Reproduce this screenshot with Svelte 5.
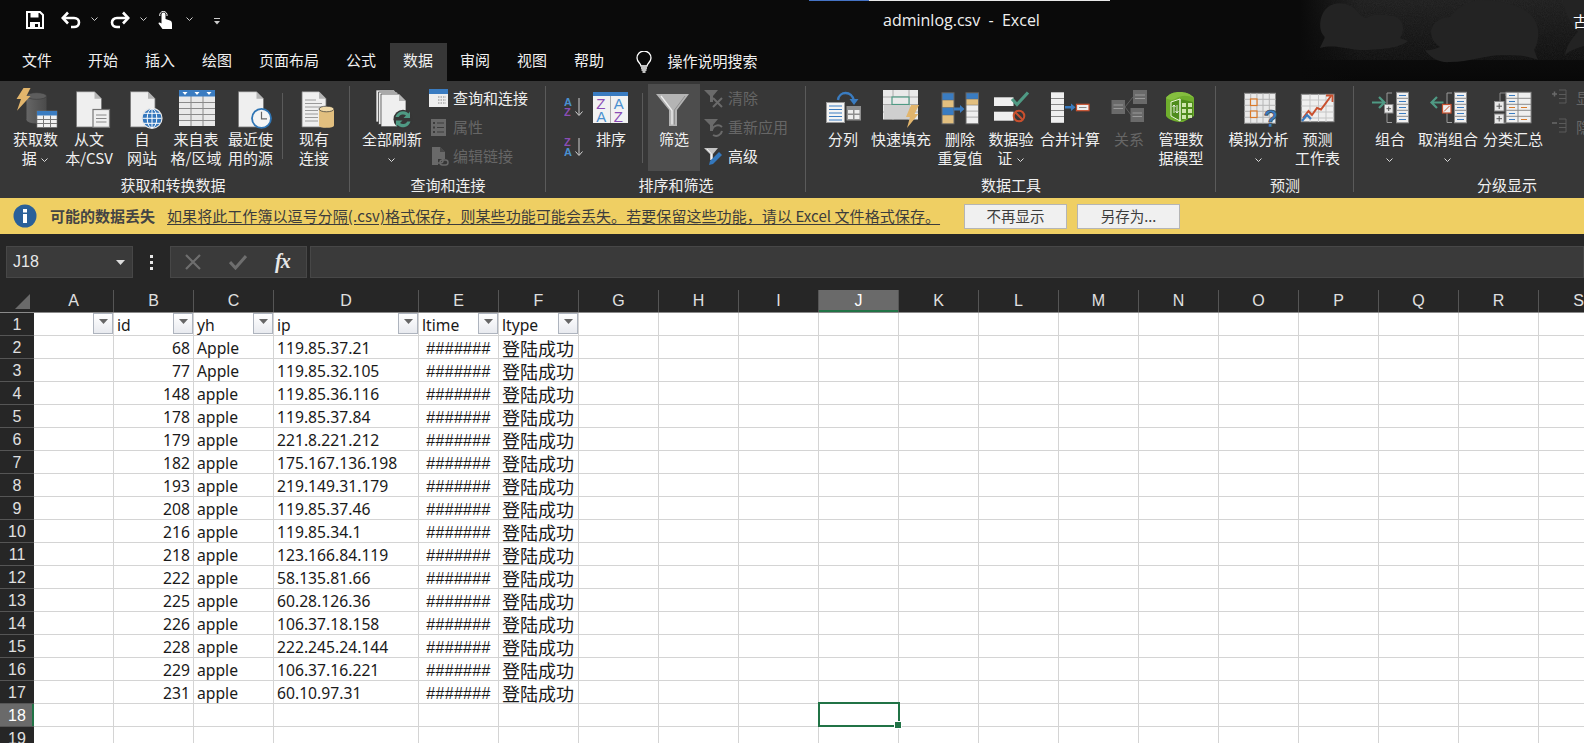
<script>
  const cols = ['A','B','C','D','E','F','G','H','I','J','K','L','M','N','O','P','Q','R','S'];
  const data = [
    [68,'Apple','119.85.37.21'],[77,'Apple','119.85.32.105'],[148,'apple','119.85.36.116'],
    [178,'apple','119.85.37.84'],[179,'apple','221.8.221.212'],[182,'apple','175.167.136.198'],
    [193,'apple','219.149.31.179'],[208,'apple','119.85.37.46'],[216,'apple','119.85.34.1'],
    [218,'apple','123.166.84.119'],[222,'apple','58.135.81.66'],[225,'apple','60.28.126.36'],
    [226,'apple','106.37.18.158'],[228,'apple','222.245.24.144'],[229,'apple','106.37.16.221'],
    [231,'apple','60.10.97.31']
  ];
  const head = ['', 'id', 'yh', 'ip', 'ltime', 'ltype'];
  const tabs = ['开始','插入','绘图','页面布局','公式','数据','审阅','视图','帮助'];
  const blanks = Array.from({ length: 13 });
</script>

<div class="app">
  <div class="top">
    <svg class="clouds" viewBox="0 0 284 81" width="284" height="81" aria-hidden="true">
      <defs>
        <linearGradient id="vg" x1="0" y1="0" x2="0" y2="1"><stop offset="0" stop-color="#1b1b1b"/><stop offset=".75" stop-color="#0b0b0b"/><stop offset="1" stop-color="#080808"/></linearGradient>
        <linearGradient id="hg" x1="0" y1="0" x2="1" y2="0"><stop offset="0" stop-color="#0a0a0a"/><stop offset="1" stop-color="#0a0a0a" stop-opacity="0"/></linearGradient>
        <filter id="nz" x="0" y="0" width="100%" height="100%"><feTurbulence type="fractalNoise" baseFrequency="1.100" numOctaves="1" seed="4"/><feColorMatrix values="0 0 0 0 .2  0 0 0 0 .2  0 0 0 0 .2  0 0 0 .35 0"/></filter>
      </defs>
      <rect width="284" height="81" fill="url(#vg)"/>
      <rect width="284" height="60" filter="url(#nz)" opacity=".5"/>
      <rect width="60" height="81" fill="url(#hg)"/>
      <path d="M20 48C22 42 26 38 24 36C18 30 19 14 28 7C36 1 50 2 58 12C62 18 66 19 70 16C76 14 84 15 94 16C103 19 106 30 100 38L108 41C100 48 80 50 60 50C45 49 35 44 20 48Z" fill="#232323"/>
      <path d="M125 50C130 58 140 63 150 62C170 62 185 55 205 55C222 55 232 57 238 60L234 50C240 40 240 25 232 16C222 5 200 0 180 0C165 2 155 10 150 17C145 17 132 20 131 32C131 40 136 44 140 47C135 49 128 51 125 50Z" fill="#232323"/>
      <path d="M263 0C264 10 268 20 278 32C270 40 266 48 265 55C270 50 278 48 284 46L284 0Z" fill="#232323"/>
    </svg>
    <header class="title">
      <div class="progress"><i></i></div>
      <div class="qat">
        <svg class="q save" viewBox="0 0 18 18" width="18" height="18"><path d="M1 1H14L17 4V17H1Z" fill="none" stroke="#fff" stroke-width="2"/><path d="M4.500 1.500H12.500V6.500H4.500Z" fill="#fff"/><path d="M4 11H14V17H4Z" fill="#fff"/><path d="M9 13H12V16H9Z" fill="#0a0a0a"/></svg>
        <svg class="q undo" viewBox="0 0 20 18" width="20" height="18"><path d="M2 7H13C16.500 7 18 9.500 18 11.500C18 14.500 15.500 16 13 16H10" fill="none" stroke="#fff" stroke-width="2.600"/><path d="M7 1.500L1.800 7L7 12.500" fill="none" stroke="#fff" stroke-width="2.600"/></svg>
        <svg class="q c1" viewBox="0 0 7 4" width="7" height="4"><path d="M.5.5L3.500 3.500L6.500.5" fill="none" stroke="#ccc"/></svg>
        <svg class="q redo" viewBox="0 0 20 18" width="20" height="18"><path d="M18 7H7C3.500 7 2 9.500 2 11.500C2 14.500 4.500 16 7 16H10" fill="none" stroke="#fff" stroke-width="2.600"/><path d="M13 1.500L18.200 7L13 12.500" fill="none" stroke="#fff" stroke-width="2.600"/></svg>
        <svg class="q c2" viewBox="0 0 7 4" width="7" height="4"><path d="M.5.5L3.500 3.500L6.500.5" fill="none" stroke="#ccc"/></svg>
        <svg class="q touch" viewBox="0 0 14 18" width="14" height="18"><path d="M3.500 10V3.500A2 2 0 0 1 7.500 3.500V8L12 9.500C13.500 10 14 11 14 13V18H4.500L.5 12.500Q.5 10.500 3.500 12.500Z" fill="#fff"/><path d="M1.800 5A3.700 3.700 0 1 1 9 5" fill="none" stroke="#fff"/></svg>
        <svg class="q c3" viewBox="0 0 7 4" width="7" height="4"><path d="M.5.5L3.500 3.500L6.500.5" fill="none" stroke="#ccc"/></svg>
        <svg class="q cust" viewBox="0 0 6 7" width="6" height="7"><path d="M0 .5H6" stroke="#ccc"/><path d="M0 3H6L3 6.500Z" fill="#ccc"/></svg>
      </div>
      <div class="name">adminlog.csv&nbsp;&nbsp;-&nbsp;&nbsp;Excel</div>
      <div class="user">古</div>
    </header>

    <nav class="tabs">
      <span class="tab first">文件</span>
      {#each tabs as t}
        <span class="tab" class:on={t === '数据'}>{t}</span>
      {/each}
      <svg class="bulb" viewBox="0 0 16 22" width="16" height="22"><path d="M5 15C4.500 12 1 11 1 7A7 7 0 0 1 15 7C15 11 11.500 12 11 15Z" fill="none" stroke="#fff" stroke-width="1.300"/><path d="M5 17H11M5.500 19H10.500M6.500 21H9.500" stroke="#fff" stroke-width="1.300"/></svg>
      <span class="search">操作说明搜索</span>
    </nav>
  </div>

  <section class="ribbon">
    <div class="group g1">
      <div class="items">
        <div class="btn" style="width:55px">
          <svg class="ic" viewBox="0 0 44 44"><defs><linearGradient id="cy" x1="0" x2="1" y1="0" y2="0"><stop offset="0" stop-color="#666"/><stop offset="1" stop-color="#4a4a4a"/></linearGradient></defs><rect x="12.500" y="10" width="20" height="24" fill="url(#cy)"/><ellipse cx="22.500" cy="34" rx="10" ry="3.500" fill="url(#cy)"/><ellipse cx="22.500" cy="10" rx="10" ry="3.300" fill="#5d5d5d" stroke="#3a3a3a" stroke-width=".6"/><path d="M9.500 2H16.500L12.500 10H16.500L3 24.700L7 13H2.500Z" fill="#e2b56c"/><rect x="23" y="25" width="20" height="16.300" fill="#f1f1f1" stroke="#777" stroke-width=".6"/><rect x="23" y="25" width="20" height="4.500" fill="#3a7cc1"/><path d="M23 33.500H43M23 37.500H43M29.500 29.500V41.300M36.500 29.500V41.300" stroke="#777"/></svg>
          <span class="lb">获取数<br>据 <svg class="car" viewBox="0 0 7 4"><path d="M.5.5L3.500 3.500L6.500.5" fill="none" stroke="#ddd"/></svg></span>
        </div>
        <div class="btn" style="width:52px">
          <svg class="ic" viewBox="0 0 44 44"><path d="M9.500 5.700H27.500L34.500 12.700V41H9.500Z" fill="#efefef" stroke="#777" stroke-width=".8"/><path d="M27.500 5.700V12.700H34.500Z" fill="#b5b5b5"/><rect x="26" y="23.500" width="16.500" height="17.800" fill="#efefef" stroke="#777" stroke-width="1.200"/><path d="M29 29H39.500M29 32.500H39.500M29 36H39.500" stroke="#888"/></svg>
          <span class="lb">从文<br>本/CSV</span>
        </div>
        <div class="btn" style="width:54px">
          <svg class="ic" viewBox="0 0 44 44"><path d="M10.500 5.700H28L35 12.700V41H10.500Z" fill="#efefef" stroke="#777" stroke-width=".8"/><path d="M28 5.700V12.700H35Z" fill="#b5b5b5"/><circle cx="32" cy="32.300" r="10" fill="#3477bd" stroke="#e8e8e8" stroke-width="1.200"/><path d="M22.500 32.300H41.500M24 27.300H40M24 37.300H40M32 22.800V41.800" stroke="#fff" stroke-width="1"/><ellipse cx="32" cy="32.300" rx="4.800" ry="9.500" fill="none" stroke="#fff"/></svg>
          <span class="lb">自<br>网站</span>
        </div>
        <div class="btn" style="width:54px">
          <svg class="ic" viewBox="0 0 44 44"><rect x="5" y="4" width="36" height="36" fill="#e9e9e9"/><path d="M5 16.500H41M5 22.500H41M5 28.500H41M5 34.500H41M17 10V40M29 10V40" stroke="#8a8a8a"/><rect x="5" y="4" width="36" height="6.500" fill="#3a7cc1"/><path d="M8.500 6H13.500L11 9ZM20.500 6H25.500L23 9ZM32.500 6H37.500L35 9Z" fill="#fff"/></svg>
          <span class="lb">来自表<br>格/区域</span>
        </div>
        <div class="btn" style="width:55px">
          <svg class="ic" viewBox="0 0 44 44"><path d="M9.500 5.700H27.500L34.500 12.700V41H9.500Z" fill="#efefef" stroke="#777" stroke-width=".8"/><path d="M27.500 5.700V12.700H34.500Z" fill="#b5b5b5"/><circle cx="32.500" cy="32.300" r="9.500" fill="#f4f4f4" stroke="#2f75b5" stroke-width="1.800"/><path d="M32.500 25.800V32.800H38" fill="none" stroke="#666" stroke-width="1.200"/></svg>
          <span class="lb">最近使<br>用的源</span>
        </div>
        <i class="vsep a"></i>
        <div class="btn" style="width:46px">
          <svg class="ic" viewBox="0 0 44 44"><path d="M10 5.700H27L34 12.700V41H10Z" fill="#efefef" stroke="#777" stroke-width=".8"/><path d="M27 5.700V12.700H34Z" fill="#b5b5b5"/><path d="M13 14H24M13 17.500H30M13 21H30M13 24.500H26M13 28H26M13 31.500H26M13 35H26" stroke="#9a9a9a"/><rect x="27" y="23" width="15" height="16.500" fill="#e2bf7f"/><ellipse cx="34.500" cy="39.500" rx="7.500" ry="2.300" fill="#e2bf7f"/><ellipse cx="34.500" cy="23" rx="7.500" ry="2.800" fill="#f0d9a8" stroke="#333" stroke-width=".7"/></svg>
          <span class="lb">现有<br>连接</span>
        </div>
      </div>
      <div class="gl" style="padding-right:4px">获取和转换数据</div>
    </div>

    <div class="group g2">
      <div class="items">
        <div class="btn" style="width:68px">
          <svg class="ic" viewBox="0 0 44 44"><path d="M6 4H24L30 10V36H6Z" fill="#e8e8e8" stroke="#333" stroke-width=".7"/><path d="M8.500 6H26.500L32.500 12V38.500H8.500Z" fill="#e8e8e8" stroke="#333" stroke-width=".7"/><path d="M11 8H29L36 15V40.700H11Z" fill="#efefef" stroke="#333" stroke-width=".7"/><path d="M29 8V15H36Z" fill="#b5b5b5"/><circle cx="33" cy="33.300" r="9.500" fill="#363636"/><path d="M25.500 31A7.800 7.800 0 0 1 38.500 27.500L40 25.500V32H33.500L36 29.500A4.800 4.800 0 0 0 28.700 31Z" fill="#4f9a84"/><path d="M40.500 35.500A7.800 7.800 0 0 1 27.500 39L26 41V34.500H32.500L30 37A4.800 4.800 0 0 0 37.300 35.500Z" fill="#4f9a84"/></svg>
          <span class="lb">全部刷新<br><svg class="car" viewBox="0 0 7 4"><path d="M.5.5L3.500 3.500L6.500.5" fill="none" stroke="#ddd"/></svg></span>
        </div>
        <div class="small sm2">
          <div class="row"><svg class="si" viewBox="0 0 20 20"><rect x="0" y="1" width="19" height="18" fill="#eee"/><rect x="0" y="1" width="19" height="5" fill="#3a7cc1"/><path d="M9 9H17M9 12H17M9 15H17" stroke="#888" stroke-dasharray="1.500 1"/></svg><span>查询和连接</span></div>
          <div class="row off"><svg class="si" viewBox="0 0 20 20"><rect x="2" y="2" width="15" height="17" fill="#696969"/><path d="M8 6H15M8 10.500H15M8 15H15" stroke="#3c3c3c"/><rect x="4" y="5" width="2" height="2" fill="#3c3c3c"/><rect x="4" y="9.500" width="2" height="2" fill="#3c3c3c"/><rect x="4" y="14" width="2" height="2" fill="#3c3c3c"/></svg><span>属性</span></div>
          <div class="row off"><svg class="si" viewBox="0 0 20 20"><path d="M3 1H11L16 6V13H9V19H3Z" fill="#696969"/><path d="M11 1V6H16Z" fill="#484848"/><rect x="6" y="12" width="8" height="5" rx="2.500" fill="none" stroke="#696969" stroke-width="1.500"/><rect x="11" y="14" width="8" height="5" rx="2.500" fill="none" stroke="#696969" stroke-width="1.500"/></svg><span>编辑链接</span></div>
        </div>
      </div>
      <div class="gl">查询和连接</div>
    </div>

    <div class="group g3">
      <div class="items">
        <div class="sorts">
          <svg class="sa" viewBox="0 0 20 22" width="20" height="22"><text x="0" y="10" class="ta">A</text><text x="0" y="20" class="tz">Z</text><path d="M15 2V19M11.500 15.500L15 19.500L18.500 15.500" fill="none" stroke="#cfcfcf"/></svg>
          <svg class="sb" viewBox="0 0 20 22" width="20" height="22"><text x="0" y="10" class="tz">Z</text><text x="0" y="20" class="ta">A</text><path d="M15 2V19M11.500 15.500L15 19.500L18.500 15.500" fill="none" stroke="#cfcfcf"/></svg>
        </div>
        <div class="btn" style="width:50px">
          <svg class="ic" viewBox="0 0 44 44"><rect x="4" y="6" width="35" height="31" fill="#f2f2f2"/><rect x="4" y="6" width="35" height="4" fill="#3a7cc1"/><path d="M21.500 10V37" stroke="#aaa"/><text x="7.300" y="23" class="tb tz">Z</text><text x="7.300" y="35.500" class="tb ta">A</text><text x="24.800" y="23" class="tb ta">A</text><text x="24.800" y="35.500" class="tb tz">Z</text></svg>
          <span class="lb">排序</span>
        </div>
        <i class="vsep b"></i>
        <div class="btn filt">
          <svg class="ic" viewBox="0 0 44 44"><path d="M4 8H37L25 24V40H17V24Z" fill="#b4b4b4"/><path d="M9 10L20 24.500V38.500" fill="none" stroke="#eee" stroke-width="1.300"/><path d="M33 10L22.500 24V38.500" fill="none" stroke="#8f8f8f"/></svg>
          <span class="lb">筛选</span>
        </div>
        <div class="small sm3">
          <div class="row off"><svg class="si" viewBox="0 0 20 20"><path d="M0 2H14L9 8V14H6V8Z" fill="#6a6a6a"/><path d="M9 10L18 19M18 10L9 19" stroke="#6a6a6a" stroke-width="2"/></svg><span>清除</span></div>
          <div class="row off"><svg class="si" viewBox="0 0 20 20"><path d="M0 2H14L9 8V14H6V8Z" fill="#6a6a6a"/><path d="M8 13A6 6 0 0 1 18 10M18 14A6 6 0 0 1 9 18" fill="none" stroke="#6a6a6a" stroke-width="2"/></svg><span>重新应用</span></div>
          <div class="row"><svg class="si" viewBox="0 0 20 20"><path d="M0 2H14L9 8V14H6V8Z" fill="#c4c4c4"/><path d="M3 3L7.500 8V13" fill="none" stroke="#fff" stroke-width=".8"/><path d="M5 19L6 15L15 6L18 9L9 18Z" fill="#3478bd"/></svg><span>高级</span></div>
        </div>
      </div>
      <div class="gl" style="padding-right:0">排序和筛选</div>
    </div>

    <div class="group g4">
      <div class="items">
        <div class="btn" style="width:58px">
          <svg class="ic" viewBox="0 0 44 44"><rect x="5.500" y="16.500" width="18" height="20" fill="#f4f4f4" stroke="#9a9a9a"/><path d="M8 20H21M8 23.500H21M8 27H21M8 30.500H21M8 34H21" stroke="#3a7cc1" stroke-width="1.200"/><rect x="25.500" y="20" width="14.500" height="14.500" fill="#8f8f8f"/><rect x="27" y="24" width="5" height="3.500" fill="#eee"/><rect x="33.500" y="24" width="5" height="3.500" fill="#eee"/><rect x="27" y="29" width="5" height="4" fill="#eee"/><rect x="33.500" y="29" width="5" height="4" fill="#eee"/><path d="M17 14C18 5 31 4 33 15" fill="none" stroke="#3a7cc1" stroke-width="2.400"/><path d="M28.500 13H37.500L33 19Z" fill="#3a7cc1"/></svg>
          <span class="lb">分列</span>
        </div>
        <div class="btn" style="width:58px">
          <svg class="ic" viewBox="0 0 44 44"><rect x="4" y="4" width="35" height="29.500" fill="#e9e9e9"/><path d="M4 11H39M4 18.500H39M4 26H39M14 4V34M30 4V34" stroke="#aaa"/><rect x="13" y="11" width="17" height="7.500" fill="#e9e9e9" stroke="#4f9a84" stroke-width="1.200"/><rect x="5" y="19" width="25" height="14" fill="#cfcfcf"/><path d="M32 19H40L35.500 28H39.500L28 42L31 31H27Z" fill="#e2b56c"/></svg>
          <span class="lb">快速填充</span>
        </div>
        <div class="btn" style="width:60px">
          <svg class="ic" viewBox="0 0 44 44"><rect x="3.500" y="6.300" width="13" height="32" fill="#666"/><rect x="4.500" y="7.300" width="11" height="6.500" fill="#3a7cc1"/><rect x="4.500" y="14.300" width="11" height="7" fill="#e2bf7f"/><rect x="4.500" y="21.800" width="11" height="7" fill="#3a7cc1"/><rect x="4.500" y="29.300" width="11" height="8" fill="#e2bf7f"/><rect x="27.500" y="6.300" width="13.500" height="32" fill="#666"/><rect x="28.500" y="7.300" width="11.500" height="5.500" fill="#3a7cc1"/><rect x="28.500" y="13.300" width="11.500" height="5.500" fill="#e2bf7f"/><rect x="28.500" y="19.300" width="11.500" height="5.500" fill="#efefef"/><rect x="28.500" y="25.300" width="11.500" height="5.500" fill="#efefef"/><rect x="28.500" y="31.300" width="11.500" height="6" fill="#efefef"/><path d="M16 21.500H22V19L26.500 23L22 27V24.500H16Z" fill="#3a7cc1"/></svg>
          <span class="lb">删除<br>重复值</span>
        </div>
        <div class="btn" style="width:42px">
          <svg class="ic" viewBox="0 0 44 44"><rect x="5" y="11.300" width="19.500" height="8.700" fill="#efefef"/><rect x="5" y="25.700" width="19.500" height="9" fill="#efefef"/><path d="M23 13L28 18.500L39 6.500" fill="none" stroke="#4f9a84" stroke-width="3.200"/><circle cx="30" cy="30" r="5.300" fill="#363636" stroke="#c9502e" stroke-width="2"/><path d="M26.500 26.500L33.500 33.500" stroke="#c9502e" stroke-width="2"/></svg>
          <span class="lb nw">数据验<br>证 <svg class="car" viewBox="0 0 7 4"><path d="M.5.5L3.500 3.500L6.500.5" fill="none" stroke="#ddd"/></svg></span>
        </div>
        <div class="btn" style="width:76px">
          <svg class="ic" viewBox="0 0 44 44"><rect x="3" y="6.300" width="13" height="30.500" fill="#efefef"/><path d="M3 12.500H16M3 18.500H16M3 24.500H16M3 30.500H16" stroke="#888"/><path d="M17 20H23V17.500L27.500 21.300L23 25V22.500H17Z" fill="#3a7cc1"/><rect x="28.500" y="18.300" width="12.500" height="6.400" fill="#efefef" stroke="#c9502e" stroke-width="1.200"/><path d="M31 21.500H38.500" stroke="#888"/></svg>
          <span class="lb">合并计算</span>
        </div>
        <div class="btn off" style="width:42px">
          <svg class="ic" viewBox="0 0 44 44"><path d="M18 21L26 11M18 21L24 29" stroke="#5e5e5e"/><rect x="4.500" y="14" width="13.500" height="14" fill="#6a6a6a"/><rect x="26" y="4" width="14" height="14" fill="#6a6a6a"/><rect x="23.500" y="22" width="13.500" height="14" fill="#6a6a6a"/><path d="M6.500 19H16M6.500 22.500H16M28 9H38M28 12.500H38M25.500 27H35M25.500 30.500H35" stroke="#9a9a9a"/></svg>
          <span class="lb">关系</span>
        </div>
        <div class="btn" style="width:62px">
          <svg class="ic" viewBox="0 0 44 44"><path d="M7 12C12 4 29 4 35 12V30L24 36C16 36 10 34 7 30Z" fill="#6fae2d"/><path d="M7 12C12 15 14 14 17 12.500C22 9 29 9 35 12C29 4 12 4 7 12Z" fill="#85bf3f"/><path d="M12 16L21 13L34 16V31L21 35L12 30Z" fill="#4f8c1d"/><path d="M21 13V35M12 16L21 13V35L12 30Z" fill="none" stroke="#e8f3d8" stroke-width="1"/><path d="M23 17H27V21H23ZM29 17H33V21H29ZM23 23H27V27H23ZM29 23H33V27H29ZM23 29H27V33H23ZM29 29H33V32H29Z" fill="#cfe6ad"/><path d="M15 27V19M13.500 21L15 19L16.500 21M18 19V27M16.500 25L18 27L19.500 25" stroke="#fff" fill="none" stroke-width=".8"/></svg>
          <span class="lb nw">管理数<br>据模型</span>
        </div>
      </div>
      <div class="gl">数据工具</div>
    </div>

    <div class="group g5">
      <div class="items">
        <div class="btn" style="width:61px">
          <svg class="ic" viewBox="0 0 44 44"><rect x="7.500" y="7.300" width="31" height="30" fill="#e9e9e9" stroke="#8a8a8a"/><path d="M7.500 13.300H38.500M7.500 19.300H38.500M7.500 25.300H38.500M7.500 31.300H38.500M13.700 7.300V37.300M19.900 7.300V37.300M26 7.300V37.300M32.300 7.300V37.300" stroke="#b5b5b5"/><rect x="13.500" y="13" width="6.500" height="6.500" fill="#e9e9e9" stroke="#d97a2a" stroke-width="1.200"/><rect x="13.500" y="25" width="6.500" height="6.500" fill="#e9e9e9" stroke="#d97a2a" stroke-width="1.200"/><text x="26.500" y="41" class="tq">?</text></svg>
          <span class="lb">模拟分析<br><svg class="car" viewBox="0 0 7 4"><path d="M.5.5L3.500 3.500L6.500.5" fill="none" stroke="#ddd"/></svg></span>
        </div>
        <div class="btn" style="width:57px">
          <svg class="ic" viewBox="0 0 44 44"><rect x="5.300" y="8.300" width="32.700" height="27.400" fill="#efefef" stroke="#8a8a8a"/><path d="M5.300 14H38M5.300 20H38M5.300 26H38M5.300 32H38M14 8.300V36M22.500 8.300V36M30 8.300V36" stroke="#c5c5c5"/><path d="M7 32L12.500 25L16 29L21 22L25 23.500L35 10" fill="none" stroke="#c9502e" stroke-width="2"/><path d="M30 9.500H36.500V16" fill="none" stroke="#c9502e" stroke-width="1.800"/><path d="M6 35L11 29L15 33" fill="none" stroke="#3a7cc1" stroke-width="2.200"/></svg>
          <span class="lb">预测<br>工作表</span>
        </div>
      </div>
      <div class="gl" style="padding-left:0">预测</div>
    </div>

    <div class="group g6">
      <div class="items">
        <div class="btn" style="width:48px">
          <svg class="ic" viewBox="0 0 44 44"><path d="M4 16.500H16M11 11L16.500 16.500L11 22" fill="none" stroke="#4f9a84" stroke-width="2.200"/><path d="M24 7H19V36.500H24" fill="none" stroke="#9a9a9a"/><rect x="28.500" y="6.300" width="12" height="30.500" fill="#efefef" stroke="#8a8a8a"/><path d="M28.500 12.300H40.500M28.500 18.300H40.500M28.500 24.300H40.500M28.500 30.300H40.500" stroke="#8a8a8a"/><path d="M31 9.500H38M31 15.500H38M31 21.500H38M31 27.500H38M31 33.500H38" stroke="#3a7cc1"/><rect x="16.500" y="18.500" width="8.500" height="8.500" fill="#e9e9e9" stroke="#8a8a8a"/><path d="M18.500 22.700H23M20.700 20.500V25" stroke="#555"/></svg>
          <span class="lb">组合<br><svg class="car" viewBox="0 0 7 4"><path d="M.5.5L3.500 3.500L6.500.5" fill="none" stroke="#ddd"/></svg></span>
        </div>
        <div class="btn" style="width:68px">
          <svg class="ic" viewBox="0 0 44 44"><path d="M17.500 16.500H5M11 11L5.500 16.500L11 22" fill="none" stroke="#4f9a84" stroke-width="2.200"/><path d="M26 7H21V36.500H26" fill="none" stroke="#9a9a9a"/><rect x="28.500" y="6.300" width="12" height="30.500" fill="#efefef" stroke="#8a8a8a"/><path d="M28.500 12.300H40.500M28.500 18.300H40.500M28.500 24.300H40.500M28.500 30.300H40.500" stroke="#8a8a8a"/><path d="M31 9.500H38M31 15.500H38M31 21.500H38M31 27.500H38M31 33.500H38" stroke="#3a7cc1"/><rect x="16.500" y="18.500" width="8.500" height="8.500" fill="#efefef" stroke="#c9502e" stroke-width="1.200"/><path d="M18 25.500L23.500 20" stroke="#c9502e"/></svg>
          <span class="lb">取消组合<br><svg class="car" viewBox="0 0 7 4"><path d="M.5.5L3.500 3.500L6.500.5" fill="none" stroke="#ddd"/></svg></span>
        </div>
        <div class="btn" style="width:62px">
          <svg class="ic" viewBox="0 0 44 44"><path d="M15 10V7H9V15M9 30V37H15" fill="none" stroke="#8a8a8a"/><rect x="3.500" y="15.500" width="9.500" height="9.500" fill="#e9e9e9" stroke="#8a8a8a"/><rect x="3.500" y="28" width="9.500" height="9.500" fill="#e9e9e9" stroke="#8a8a8a"/><path d="M5.500 20.200H11M8.200 17.500V23M5.500 32.700H11M8.200 30V35.500" stroke="#555"/><rect x="15" y="6.300" width="25" height="30.500" fill="#efefef" stroke="#8a8a8a"/><path d="M15 12.300H40M15 18.300H40M15 24.300H40M15 30.300H40M27 6.300V36.800" stroke="#8a8a8a"/><path d="M18 9.500H24M18 15.500H24M18 27.500H24M18 33.500H24" stroke="#3a7cc1"/><path d="M18 21.500H24M30 21.500H36M30 33.500H36" stroke="#d97a2a"/></svg>
          <span class="lb">分类汇总</span>
        </div>
        <div class="small sm6">
          <div class="row off"><svg class="si" viewBox="0 0 20 20"><path d="M0 6H5M2.500 3.500V8.500" stroke="#6a6a6a" stroke-width="1.500"/><path d="M7 2H14V15H7M7 6.500H14M7 10.500H14" fill="none" stroke="#5a5a5a"/></svg><span>显示明细数据</span></div>
          <div class="row off"><svg class="si" viewBox="0 0 20 20"><path d="M0 6H5" stroke="#6a6a6a" stroke-width="1.500"/><path d="M7 2H14V15H7M7 6.500H14M7 10.500H14" fill="none" stroke="#5a5a5a"/></svg><span>隐藏明细数据</span></div>
        </div>
      </div>
      <div class="gl last">分级显示</div>
    </div>
  </section>

  <aside class="notice">
    <svg class="info" viewBox="0 0 24 24" width="24" height="24"><circle cx="12" cy="12" r="11.500" fill="#2a6099"/><rect x="10" y="5" width="4" height="3.500" fill="#fff"/><rect x="10" y="10" width="4" height="9" fill="#fff"/></svg>
    <strong>可能的数据丢失</strong>
    <span class="link">如果将此工作簿以逗号分隔(.csv)格式保存，则某些功能可能会丢失。若要保留这些功能，请以 Excel 文件格式保存。</span>
    <span class="nb one">不再显示</span>
    <span class="nb two">另存为...</span>
  </aside>

  <div class="formula">
    <div class="namebox">J18<svg viewBox="0 0 9 5" width="9" height="5"><path d="M0 0H9L4.500 5Z" fill="#ddd"/></svg></div>
    <div class="dots"><i></i><i></i><i></i></div>
    <div class="fbtns">
      <svg viewBox="0 0 16 16" width="16" height="16"><path d="M1 1L15 15M15 1L1 15" stroke="#6e6e6e" stroke-width="2.200"/></svg>
      <svg viewBox="0 0 18 16" width="18" height="16"><path d="M1 8L6.500 14L17 2" fill="none" stroke="#6e6e6e" stroke-width="3"/></svg>
      <span class="fx">fx</span>
    </div>
    <div class="finput"></div>
  </div>

  <div class="sheet">
    <div class="colhead">
      <div class="corner"><svg viewBox="0 0 15 15" width="15" height="15"><path d="M15 0V15H0Z" fill="#6a6a6a"/></svg></div>
      {#each cols as c}
        <div class="ch" class:wide={c === 'D'} class:sel={c === 'J'}>{c}</div>
      {/each}
    </div>

    <div class="gridrow">
      <div class="rh">1</div>
      {#each head as h, i}
        <div class="cell txt" class:wide={i === 3}>{h}<span class="fb"><svg viewBox="0 0 9 5" width="9" height="5"><path d="M0 0H9L4.500 5Z" fill="#666"/></svg></span></div>
      {/each}
      {#each blanks as _}<div class="cell"></div>{/each}
    </div>

    {#each data as d, r}
      <div class="gridrow">
        <div class="rh">{r + 2}</div>
        <div class="cell"></div>
        <div class="cell num">{d[0]}</div>
        <div class="cell txt">{d[1]}</div>
        <div class="cell txt wide">{d[2]}</div>
        <div class="cell hash">#######</div>
        <div class="cell cn">登陆成功</div>
        {#each blanks as _}<div class="cell"></div>{/each}
      </div>
    {/each}

    {#each [18, 19] as n}
      <div class="gridrow">
        <div class="rh" class:sel={n === 18}>{n}</div>
        {#each cols as c}<div class="cell" class:wide={c === 'D'}></div>{/each}
      </div>
    {/each}

    <div class="active"><i></i></div>
  </div>
</div>

<style>
  :global(body) { margin: 0; overflow: hidden; background: #fff; }
  .app { width: 1584px; height: 743px; overflow: hidden; display: flex; flex-direction: column; font-family: "Noto Sans CJK SC", "Liberation Sans", sans-serif; font-size: 15px; color: #f0f0f0; }

  .top { position: relative; flex: 0 0 81px; background: #0a0a0a; overflow: hidden; }
  .clouds { position: absolute; left: 1300px; top: 0; }
  .title { position: relative; height: 43px; display: flex; align-items: center; }
  .progress { position: absolute; left: 809px; top: 0; width: 301px; height: 1px; background: #e8e8e8; }
  .progress i { display: block; width: 60px; height: 1px; background: #4472c4; }
  .qat { position: relative; flex: 0 0 883px; height: 43px; display: flex; align-items: center; padding-left: 26px; box-sizing: border-box; }
  .q { flex: none; display: block; }
  .save { margin-top: -3px; }
  .undo { margin-left: 17px; margin-top: -3px; }
  .c1 { margin-left: 10px; margin-top: -5px; }
  .redo { margin-left: 12px; margin-top: -3px; }
  .c2 { margin-left: 10px; margin-top: -5px; }
  .touch { margin-left: 11px; margin-top: -4px; }
  .c3 { margin-left: 14px; margin-top: -5px; }
  .cust { margin-left: 21px; margin-top: -1px; }
  .name { position: relative; flex: 0 0 690px; font-family: "Open Sans", sans-serif; font-size: 16px; color: #f0f0f0; margin-top: -4px; white-space: nowrap; }
  .user { position: relative; flex: none; color: #fff; margin-top: -2px; }

  .tabs { position: relative; height: 38px; display: flex; align-items: center; padding-left: 8.5px; }
  .tab { width: 57px; height: 38px; line-height: 33px; text-align: center; flex: none; white-space: nowrap; }
  .tab:nth-child(5) { width: 87px; }
  .tab.first { margin-right: 9px; }
  .tab.on { background: #373737; }
  .bulb { margin-left: 18px; flex: none; }
  .search { margin-left: 16px; margin-bottom: 3px; }

  .ribbon { flex: 0 0 117px; display: flex; background: #373737; position: relative; }
  .group { position: relative; flex: none; box-sizing: border-box; display: flex; flex-direction: column; height: 117px; padding-top: 5px; }
  .group::after { content: ""; position: absolute; right: 0; top: 5px; height: 106px; width: 1px; background: #5a5a5a; }
  .group.g6::after { display: none; }
  .g1 { width: 350px; padding-left: 8px; }
  .g2 { width: 196px; padding-left: 8px; }
  .g3 { width: 260px; padding-left: 16px; }
  .g4 { width: 410px; padding-left: 8px; }
  .g5 { width: 138px; padding-left: 12px; }
  .g6 { width: 230px; padding-left: 12px; overflow: hidden; }
  .items { display: flex; height: 87px; flex: none; }
  .btn { flex: none; display: flex; flex-direction: column; align-items: center; text-align: center; }
  .btn.off .lb { color: #666; }
  .ic { width: 44px; height: 44px; flex: none; display: block; }
  .lb { display: block; margin-top: -1px; line-height: 19px; white-space: nowrap; }
  .car { display: inline-block; width: 7px; height: 4px; vertical-align: 2px; margin: 0 1px; }
  .gl { position: absolute; left: 0; right: 0; top: 93px; text-align: center; line-height: 22px; white-space: nowrap; }
  .gl.last { left: 0; width: 306px; }

  .vsep { flex: none; width: 1px; background: #5a5a5a; }
  .vsep.a { height: 66px; margin: 7px 8px 0 4px; }
  .vsep.b { height: 70px; margin: 7px 5px 0 6px; }
  .small { flex: none; margin-top: -3px; }
  .sm2 { margin-left: 3px; }
  .sm3 { margin-left: 4px; }
  .sm6 { margin-left: 8px; }
  .row { display: flex; align-items: center; height: 29px; white-space: nowrap; }
  .row span { margin-left: 4px; }
  .row.off span { color: #666; }
  .si { width: 20px; height: 20px; flex: none; }
  .sorts { flex: none; width: 24px; display: flex; flex-direction: column; padding-left: 2px; box-sizing: border-box; padding-top: 10px; }
  .sb { margin-top: 18px; }
  .filt { width: 52px; height: 87px; margin-top: -2px; padding-top: 2px; box-sizing: border-box; background: #4d4d4d; }
  .ta { fill: #4a90d0; font: 700 11px "Liberation Sans", sans-serif; }
  .tz { fill: #8a4db5; font: 700 11px "Liberation Sans", sans-serif; }
  .tb { font-size: 15px; font-weight: 400; }
  .tq { fill: #3a7cc1; font: 700 24px "Liberation Sans", sans-serif; stroke: #363636; stroke-width: .6px; }

  .notice { flex: 0 0 36px; display: flex; align-items: center; background: #efcf63; color: #3c3c3c; padding-left: 13px; white-space: nowrap; }
  .info { flex: none; }
  .notice strong { margin-left: 13px; margin-top: -2px; font-weight: 700; color: #444; }
  .link { margin-left: 12px; margin-top: -2px; text-decoration: underline; text-underline-offset: 2px; width: 772px; flex: none; letter-spacing: .07px; }
  .nb { flex: none; box-sizing: border-box; height: 25px; line-height: 22px; width: 103px; text-align: center; background: #f0f0f0; border: 1px solid #b5b5b5; color: #3c3c3c; font-size: 14.5px; }
  .nb.one { margin-left: 25px; }
  .nb.two { margin-left: 10px; }

  .formula { flex: 0 0 56px; display: flex; background: #262626; padding-top: 12px; box-sizing: border-box; }
  .namebox { flex: none; margin-left: 6px; width: 127px; height: 32px; box-sizing: border-box; background: #3a3a3a; border: 1px solid #474747; display: flex; align-items: center; justify-content: space-between; padding: 0 7px 0 6px; color: #e8e8e8; font: 16px "Liberation Sans", sans-serif; }
  .dots { flex: none; width: 37px; height: 32px; display: flex; flex-direction: column; align-items: center; justify-content: center; gap: 3px; }
  .dots i { display: block; width: 3px; height: 3px; background: #e8e8e8; }
  .fbtns { flex: none; width: 137px; height: 32px; box-sizing: border-box; background: #3a3a3a; border: 1px solid #474747; display: flex; align-items: center; padding-left: 14px; gap: 28px; }
  .fx { font: italic 700 20px "Liberation Serif", serif; color: #e8e8e8; letter-spacing: -1px; margin-top: -2px; }
  .finput { flex: 1; height: 32px; margin-left: 3px; box-sizing: border-box; background: #3a3a3a; border: 1px solid #474747; }

  .sheet { position: relative; flex: 1; background: #fff; overflow: hidden; }
  .colhead { display: flex; height: 23px; box-sizing: border-box; background: #262626; border-bottom: 1px solid #8a8a8a; width: 1700px; }
  .corner { flex: none; width: 34px; box-sizing: border-box; padding: 4px 0 0 15px; }
  .corner svg { display: block; }
  .ch { flex: none; width: 80px; box-sizing: border-box; border-right: 1px solid #555; text-align: center; color: #e0e0e0; font: 16px/22px "Liberation Sans", sans-serif; }
  .ch.wide { width: 145px; }
  .ch.sel { background: #6a6a6a; box-shadow: inset 0 -2px 0 #217346; color: #fff; }
  .gridrow { display: flex; height: 23px; width: 1700px; }
  .rh { flex: none; width: 34px; box-sizing: border-box; background: #262626; border-bottom: 1px solid #555; color: #e0e0e0; text-align: center; font: 16px/23px "Liberation Sans", sans-serif; }
  .rh.sel { background: #6a6a6a; box-shadow: inset -2px 0 0 #217346; color: #fff; }
  .cell { position: relative; flex: none; width: 80px; height: 23px; box-sizing: border-box; border-right: 1px solid #d4d4d4; border-bottom: 1px solid #d4d4d4; color: #1a1a1a; font: 15.7px/25px "Noto Sans", "Noto Sans CJK SC", sans-serif; overflow: hidden; white-space: nowrap; }
  .cell.wide { width: 145px; }
  .txt { padding-left: 3px; }
  .num { text-align: right; padding-right: 3px; }
  .hash { text-align: center; font: 16px/25px "Liberation Sans", sans-serif; letter-spacing: .3px; }
  .cn { font: 18px/25px "Noto Sans CJK SC", sans-serif; padding-left: 3px; }
  .fb { position: absolute; right: 0; top: 0; width: 20px; height: 21px; box-sizing: border-box; border: 1px solid #aeb4be; background: linear-gradient(#fff, #e8eaef); display: flex; align-items: center; justify-content: center; }
  .fb svg { display: block; margin-top: -4px; }
  .active { position: absolute; left: 818px; top: 412px; width: 82px; height: 25px; box-sizing: border-box; border: 2px solid #217346; }
  .active i { position: absolute; right: -4px; bottom: -4px; width: 6px; height: 6px; background: #217346; border: 1px solid #fff; box-sizing: content-box; }
</style>
